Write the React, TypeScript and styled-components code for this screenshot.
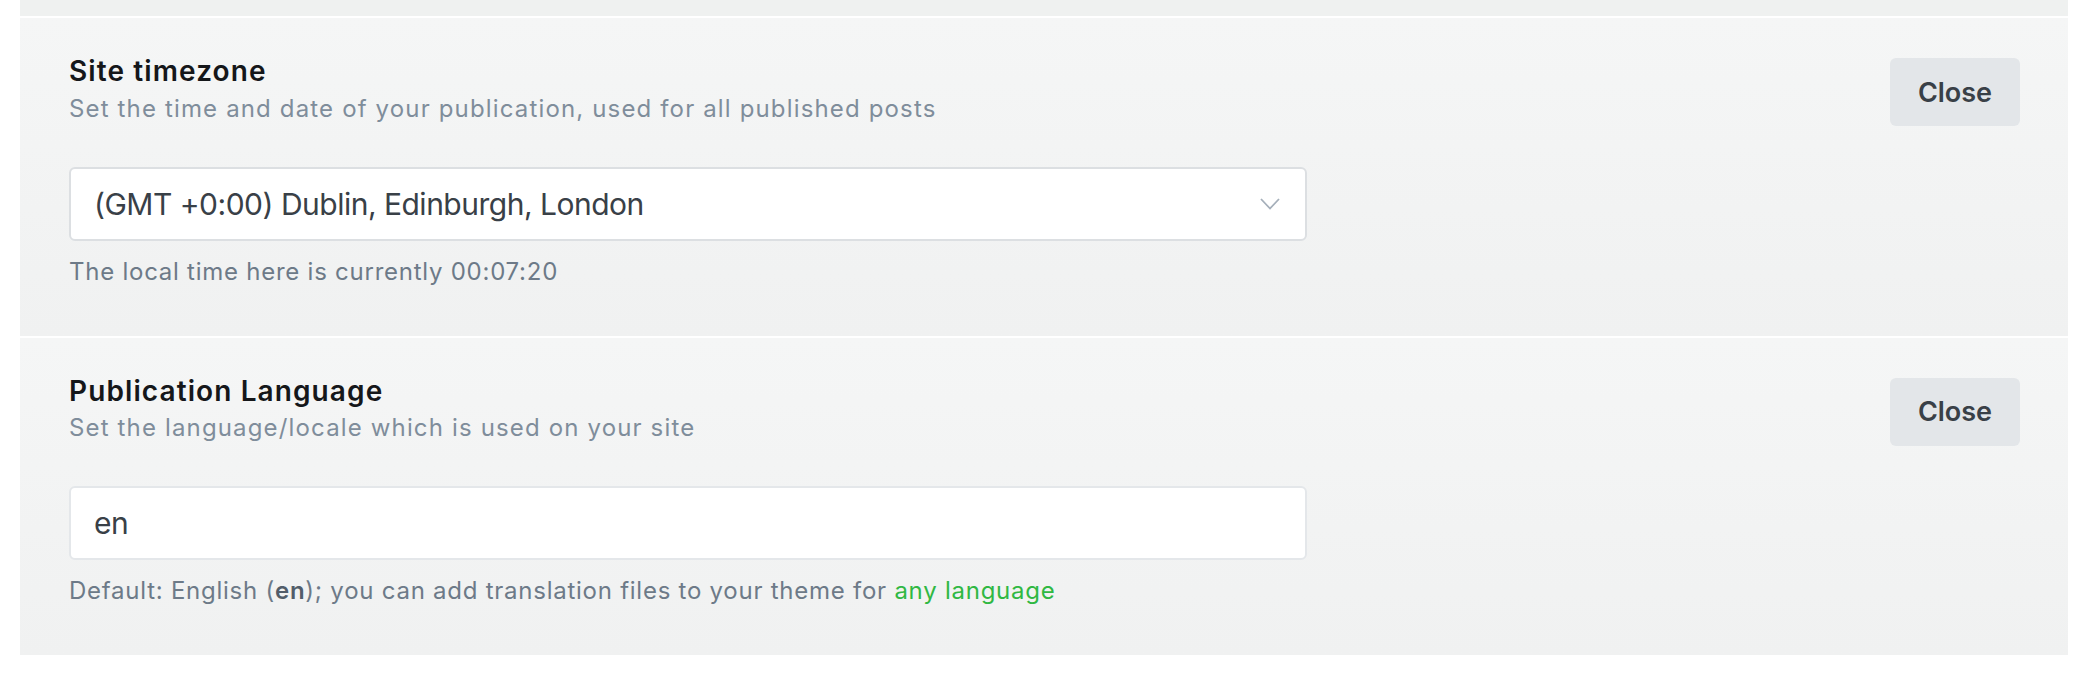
import styled, { createGlobalStyle } from 'styled-components';

const GlobalStyle = createGlobalStyle`
  html, body {
    margin: 0;
    padding: 0;
    background: #fff;
  }
  body {
    font-family: Inter, "Noto Sans", "Liberation Sans", sans-serif;
    -webkit-font-smoothing: antialiased;
  }
`;

const Page = styled.div`
  display: flex;
  flex-direction: column;
  gap: 2px;
  padding: 0 24px 23px 20px;
`;

const PrevBlock = styled.div`
  height: 16px;
  background: #eff1f0;
`;

const Block = styled.section`
  background: linear-gradient(#f5f6f6, #f0f1f1);
  padding: 37px 48px 46px 49px;
`;

const Header = styled.div`
  display: flex;
  justify-content: space-between;
  align-items: flex-start;
`;

const Title = styled.h4`
  margin: 0;
  font-size: 28px;
  line-height: 1.2;
  font-weight: 600;
  letter-spacing: 1.1px;
  color: #15171a;
`;

const Desc = styled.p`
  margin: 2px 0 0;
  font-size: 24px;
  line-height: 36px;
  letter-spacing: 1.15px;
  color: #7f8d9b;
`;

const CloseButton = styled.button`
  margin-top: 3px;
  width: 130px;
  height: 68px;
  border: 0;
  border-radius: 6px;
  background: #e3e6e9;
  color: #394047;
  font-family: inherit;
  font-size: 27px;
  font-weight: 600;
  cursor: pointer;
`;

const Field = styled.div<{ $border: string }>`
  margin-top: 40px;
  width: 1238px;
  height: 74px;
  box-sizing: border-box;
  display: flex;
  align-items: center;
  justify-content: space-between;
  padding: 0 25px 0 23px;
  background: #fff;
  border: 2px solid ${(p) => p.$border};
  border-radius: 6px;
  font-size: 30px;
  letter-spacing: -0.5px;
  color: #394047;
`;

const Help = styled.p`
  margin: 13px 0 0;
  font-size: 24px;
  line-height: 36px;
  letter-spacing: 0.75px;
  color: #6d7a88;

  b {
    font-weight: 600;
    color: #515d6a;
  }
`;

const Link = styled.a`
  color: #30b843;
  text-decoration: none;
`;

const Chevron = () => (
  <svg width="20" height="12" viewBox="0 0 20 12" fill="none">
    <path d="M1 1l9 9.5L19 1" stroke="#a5afba" strokeWidth="1.8" />
  </svg>
);

export default function App() {
  return (
    <>
      <GlobalStyle />
      <Page>
        <PrevBlock />
        <Block>
          <Header>
            <div>
              <Title>Site timezone</Title>
              <Desc>Set the time and date of your publication, used for all published posts</Desc>
            </div>
            <CloseButton>Close</CloseButton>
          </Header>
          <Field $border="#dcdfe2">
            <span>(GMT +0:00) Dublin, Edinburgh, London</span>
            <Chevron />
          </Field>
          <Help>The local time here is currently 00:07:20</Help>
        </Block>
        <Block>
          <Header>
            <div>
              <Title>Publication Language</Title>
              <Desc>Set the language/locale which is used on your site</Desc>
            </div>
            <CloseButton>Close</CloseButton>
          </Header>
          <Field $border="#e4e7ea">
            <span>en</span>
          </Field>
          <Help>
            Default: English (<b>en</b>); you can add translation files to your theme for{' '}
            <Link href="#">any language</Link>
          </Help>
        </Block>
      </Page>
    </>
  );
}
